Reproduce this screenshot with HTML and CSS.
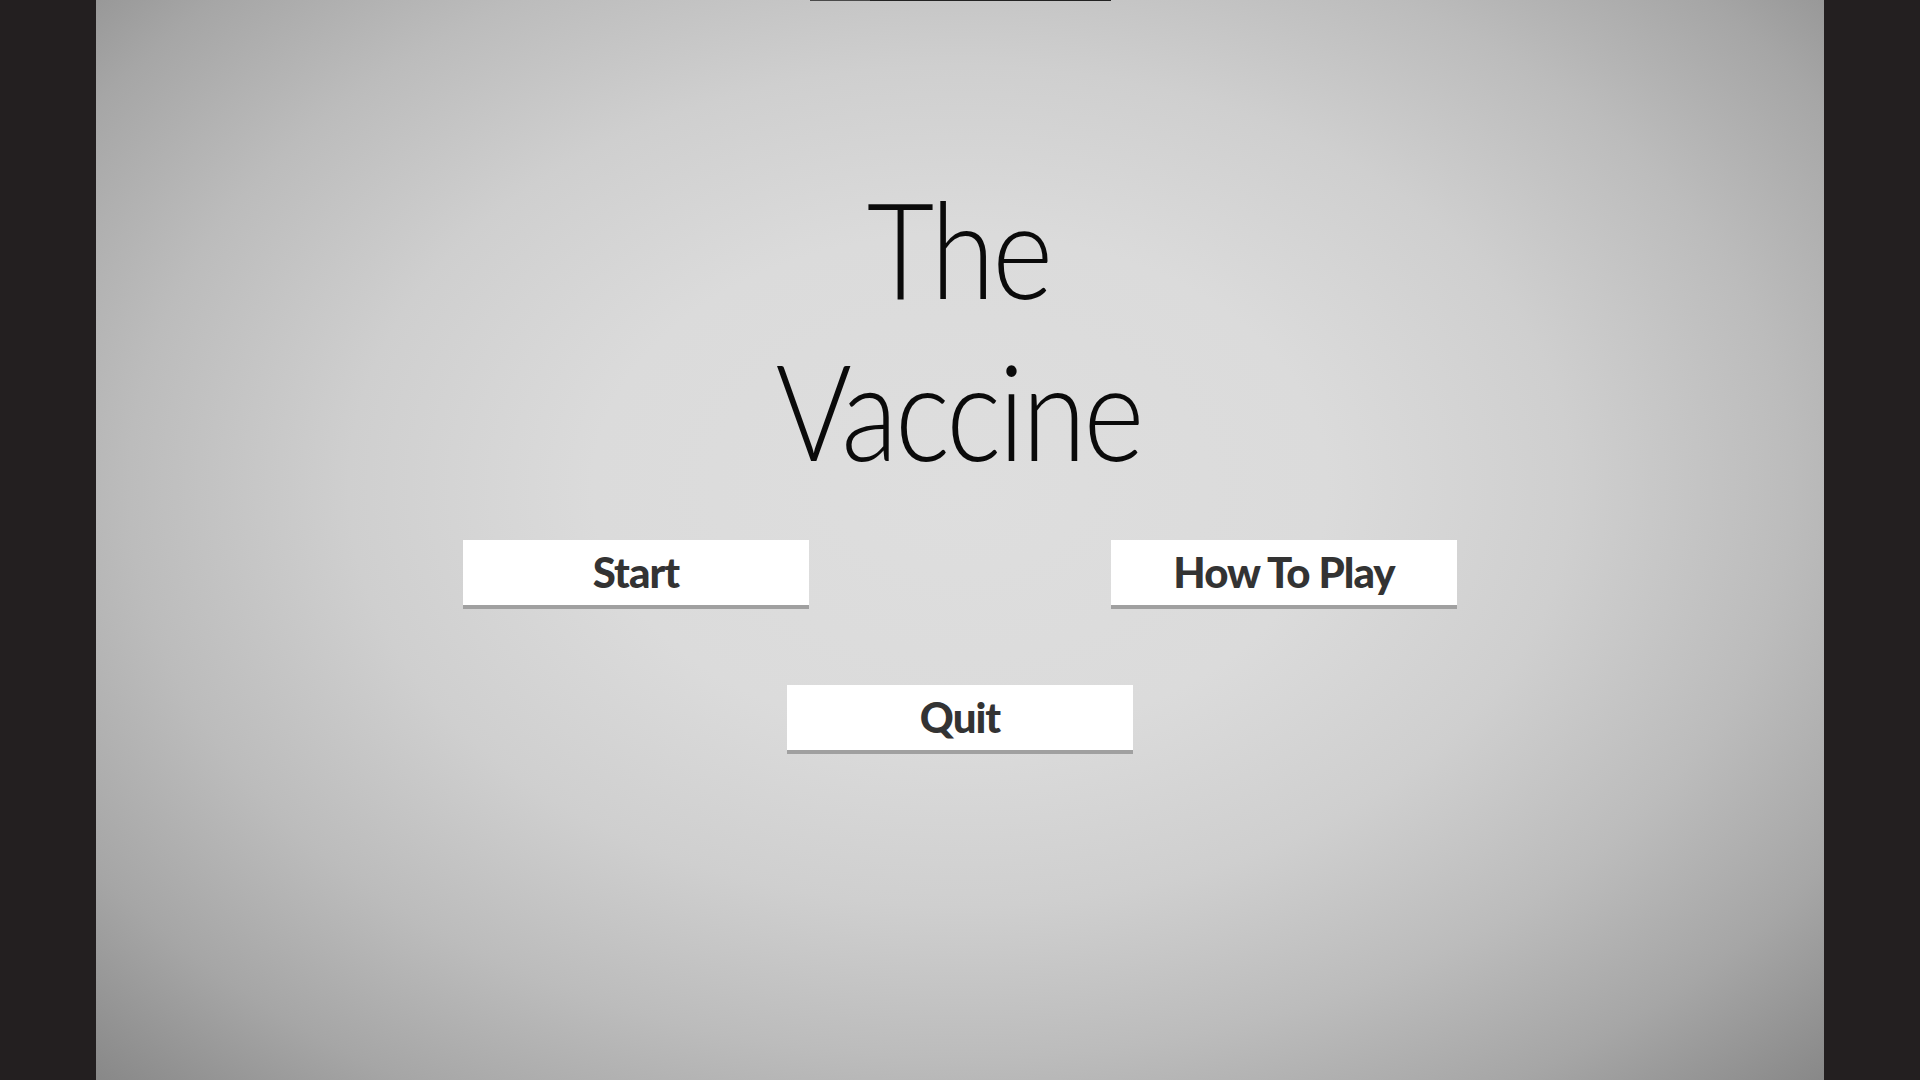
FILE: index.html
```html
<!DOCTYPE html>
<html lang="en">
<head>
<meta charset="utf-8">
<title>The Vaccine</title>
<link rel="stylesheet" href="styles.css">
</head>
<body>
<div class="stage">
  <div class="loadbar"><div class="loadbar-fill"></div></div>
  <h1 class="title">The<br>Vaccine</h1>
  <div class="menu-row">
    <button class="menu-btn">Start</button>
    <button class="menu-btn">How To Play</button>
  </div>
  <div class="menu-row single">
    <button class="menu-btn">Quit</button>
  </div>
</div>
</body>
</html>
```
FILE: styles.css
```css
html, body {
  margin: 0;
  padding: 0;
  height: 100%;
}
body {
  background: #231f20;
  overflow: hidden;
}
.stage {
  width: 1728px;
  height: 1080px;
  margin: 0 auto;
  display: flex;
  flex-direction: column;
  align-items: center;
  background: radial-gradient(ellipse farthest-corner at 50% 45%, #dedede 0%, #dbdbdb 30%, #cfcfcf 50%, #bcbcbc 68%, #a6a6a6 84%, #888888 100%);
}
.loadbar {
  width: 301px;
  height: 1px;
  background: #222222;
}
.loadbar-fill {
  width: 60px;
  height: 1px;
  background: #4a4a4a;
}
.title {
  margin: 166px 0 0 0;
  padding-right: 3px;
  font-family: "Lato", sans-serif;
  font-weight: 300;
  font-size: 134px;
  line-height: 162px;
  color: #0a0a0a;
  text-align: center;
  letter-spacing: -3px;
  transform: scaleX(0.87);
}
.menu-row {
  display: flex;
  gap: 302px;
  margin-top: 49px;
}
.menu-row.single {
  margin-top: 76px;
}
.menu-btn {
  width: 346px;
  height: 69px;
  padding: 0 0 2px 0;
  border: 0;
  border-bottom: 4px solid #a0a0a0;
  background: #ffffff;
  font-family: "Lato", sans-serif;
  font-weight: 900;
  font-size: 42px;
  color: #333333;
  letter-spacing: -1px;
  box-sizing: border-box;
}
```
